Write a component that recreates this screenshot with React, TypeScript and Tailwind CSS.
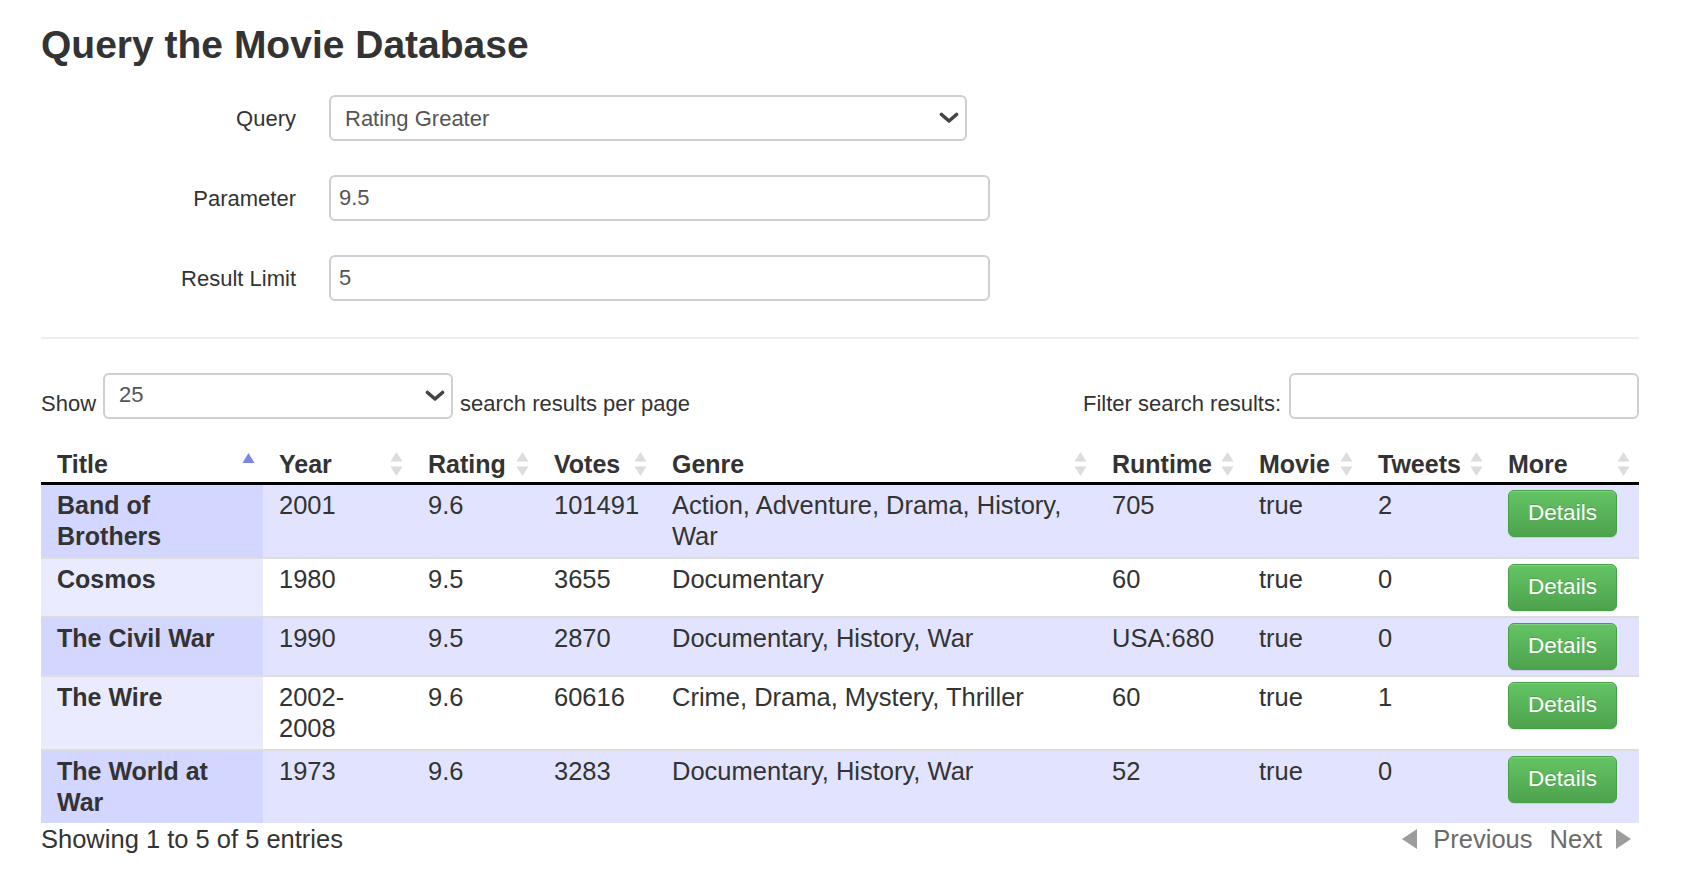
import React from "react";

const FONT = "font-['Liberation_Sans',Arial,Helvetica,sans-serif]";

type Row = {
  title: React.ReactNode;
  year: React.ReactNode;
  rating: string;
  votes: string;
  genre: string;
  runtime: string;
  movie: string;
  tweets: string;
};

const rows: Row[] = [
  { title: "Band of Brothers", year: "2001", rating: "9.6", votes: "101491", genre: "Action, Adventure, Drama, History, War", runtime: "705", movie: "true", tweets: "2" },
  { title: "Cosmos", year: "1980", rating: "9.5", votes: "3655", genre: "Documentary", runtime: "60", movie: "true", tweets: "0" },
  { title: "The Civil War", year: "1990", rating: "9.5", votes: "2870", genre: "Documentary, History, War", runtime: "USA:680", movie: "true", tweets: "0" },
  { title: "The Wire", year: (<>2002-<wbr />2008</>), rating: "9.6", votes: "60616", genre: "Crime, Drama, Mystery, Thriller", runtime: "60", movie: "true", tweets: "1" },
  { title: "The World at War", year: "1973", rating: "9.6", votes: "3283", genre: "Documentary, History, War", runtime: "52", movie: "true", tweets: "0" },
];

const headers = ["Title", "Year", "Rating", "Votes", "Genre", "Runtime", "Movie", "Tweets", "More"];

function Chevron() {
  return (
    <svg width="20" height="12" viewBox="0 0 20 12" className="shrink-0">
      <path d="M2.5 2.5 L10 9 L17.5 2.5" fill="none" stroke="#444" strokeWidth="3.6" strokeLinecap="round" strokeLinejoin="round" />
    </svg>
  );
}

function SortIcon({ active }: { active?: boolean }) {
  if (active) {
    return (
      <svg width="13" height="24" viewBox="0 0 13 24" className="absolute right-[8px] top-[9px]">
        <polygon points="6.5,0 12.5,10 0.5,10" fill="#7d85e3" />
      </svg>
    );
  }
  return (
    <svg width="13" height="24" viewBox="0 0 13 24" className="absolute right-[9px] top-[8px]">
      <polygon points="6.5,0 12.5,9.5 0.5,9.5" fill="#dcdcdc" />
      <polygon points="0.5,14.5 12.5,14.5 6.5,24" fill="#dcdcdc" />
    </svg>
  );
}

function DetailsButton() {
  return (
    <button className="flex h-[47px] w-[109px] items-center justify-center rounded-[6px] border border-[#46a046] bg-linear-to-b from-[#64c464] to-[#4da34d] text-[22.5px] leading-none text-white shadow-[inset_0_1px_0_rgba(255,255,255,0.2),0_1px_1px_rgba(0,0,0,0.1)] [text-shadow:0_-1px_0_rgba(0,0,0,0.15)]">
      Details
    </button>
  );
}

export default function App() {
  const colWidths = ["w-[222px]", "w-[149px]", "w-[126px]", "w-[118px]", "w-[440px]", "w-[147px]", "w-[119px]", "w-[130px]", "w-[147px]"];
  return (
    <div className={`min-h-screen bg-white text-[#333] ${FONT}`}>
      <div className="ml-[41px] w-[1598px]">
        <h1 className="pt-[23px] text-[39px] font-bold leading-[43px] text-[#333]">Query the Movie Database</h1>

        <div className="mt-[29px] flex flex-col gap-[34px]">
          <div className="flex items-center gap-[33px]">
            <label className="w-[255px] text-right text-[22px]">Query</label>
            <div className="flex h-[46px] w-[638px] items-center justify-between rounded-[6px] border-2 border-[#cfcfcf] pl-[14px] pr-[6px] text-[22px] text-[#555]">
              <span>Rating Greater</span>
              <Chevron />
            </div>
          </div>
          <div className="flex items-center gap-[33px]">
            <label className="w-[255px] text-right text-[22px]">Parameter</label>
            <input readOnly value="9.5" className="h-[46px] w-[661px] rounded-[6px] border-2 border-[#cfcfcf] px-[8px] text-[22px] text-[#555] outline-none" />
          </div>
          <div className="flex items-center gap-[33px]">
            <label className="w-[255px] text-right text-[22px]">Result Limit</label>
            <input readOnly value="5" className="h-[46px] w-[661px] rounded-[6px] border-2 border-[#cfcfcf] px-[8px] text-[22px] text-[#555] outline-none" />
          </div>
        </div>

        <div className="mt-[36px] h-[2px] w-full bg-[#eeeeee]" />

        <div className="mt-[34px] flex items-end justify-between text-[22px]">
          <div className="flex items-end">
            <span className="mb-[2px] leading-[26px]">Show</span>
            <div className="ml-[7px] flex h-[46px] w-[350px] items-center justify-between rounded-[6px] border-2 border-[#cfcfcf] pl-[14px] pr-[6px] text-[#555]">
              <span className="-mt-[3px]">25</span>
              <Chevron />
            </div>
            <span className="mb-[2px] ml-[7px] leading-[26px]">search results per page</span>
          </div>
          <div className="flex items-end">
            <span className="mb-[2px] leading-[26px]">Filter search results:</span>
            <input readOnly className="ml-[8px] h-[46px] w-[350px] rounded-[6px] border-2 border-[#cfcfcf] outline-none" />
          </div>
        </div>

        <table className="mt-[25px] w-[1598px] table-fixed border-collapse text-[25.5px] leading-[31px]">
          <colgroup>
            {colWidths.map((w, i) => (
              <col key={i} className={w} />
            ))}
          </colgroup>
          <thead>
            <tr>
              {headers.map((h, i) => (
                <th key={h} className="relative border-b-[3px] border-black px-[16px] pb-[2px] pt-[4px] text-left text-[25px] font-bold leading-[32px]">
                  {h}
                  <SortIcon active={i === 0} />
                </th>
              ))}
            </tr>
          </thead>
          <tbody>
            {rows.map((r, i) => {
              const odd = i % 2 === 0;
              const rowBg = odd ? "bg-[#e2e4ff]" : "bg-white";
              const sortBg = odd ? "bg-[#d3d6ff]" : "bg-[#eaebff]";
              const border = i === 0 ? "" : "border-t-2 border-[#dddddd]";
              const td = `align-top px-[16px] pt-[5px] pb-[5px] ${border}`;
              return (
                <tr key={i} className={rowBg}>
                  <td className={`${td} ${sortBg} text-[25px] font-bold`}>{r.title}</td>
                  <td className={td}>{r.year}</td>
                  <td className={td}>{r.rating}</td>
                  <td className={td}>{r.votes}</td>
                  <td className={td}>{r.genre}</td>
                  <td className={td}>{r.runtime}</td>
                  <td className={td}>{r.movie}</td>
                  <td className={td}>{r.tweets}</td>
                  <td className={td}>
                    <DetailsButton />
                  </td>
                </tr>
              );
            })}
          </tbody>
        </table>

        <div className="mt-[2px] flex items-center justify-between text-[25.5px] leading-[28px]">
          <span>Showing 1 to 5 of 5 entries</span>
          <div className="flex items-center pr-[6px] text-[#6b6b6b]">
            <svg width="19" height="22" viewBox="0 0 19 22" className="blur-[0.7px]">
              <polygon points="17,1 17,21 2,11" fill="#9c9c9c" />
            </svg>
            <span className="ml-[14px]">Previous</span>
            <span className="ml-[17px]">Next</span>
            <svg width="19" height="22" viewBox="0 0 19 22" className="ml-[12px] blur-[0.7px]">
              <polygon points="2,1 2,21 17,11" fill="#9c9c9c" />
            </svg>
          </div>
        </div>
      </div>
    </div>
  );
}
